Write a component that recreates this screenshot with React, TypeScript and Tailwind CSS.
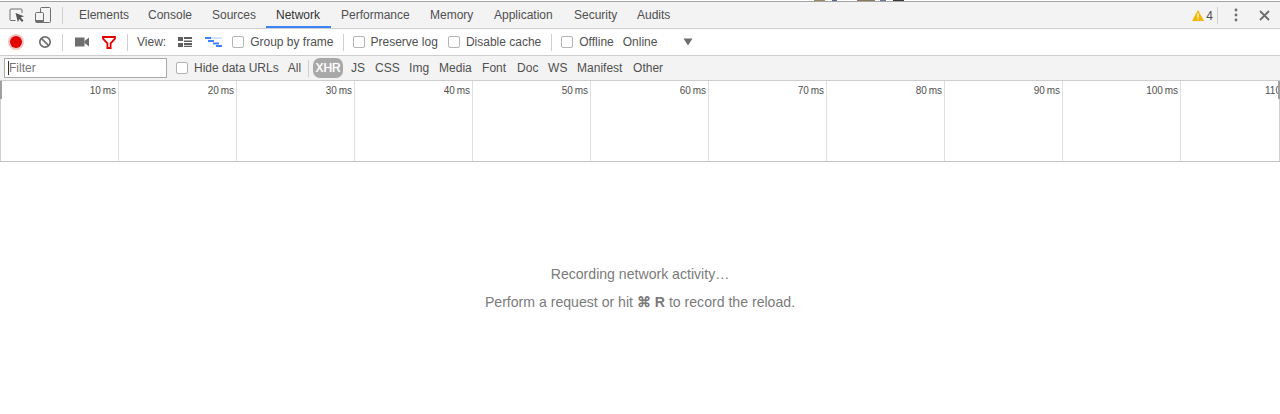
const tabs = [
  { name: 'Elements', w: 'w-[69px]' },
  { name: 'Console', w: 'w-[64px]' },
  { name: 'Sources', w: 'w-[64px]' },
  { name: 'Network', w: 'w-[65px]' },
  { name: 'Performance', w: 'w-[89px]' },
  { name: 'Memory', w: 'w-[64px]' },
  { name: 'Application', w: 'w-[80px]' },
  { name: 'Security', w: 'w-[63px]' },
  { name: 'Audits', w: 'w-[54px]' },
];
const types = [
  { name: 'JS', w: 'w-[24px]' },
  { name: 'CSS', w: 'w-[34px]' },
  { name: 'Img', w: 'w-[30px]' },
  { name: 'Media', w: 'w-[43px]' },
  { name: 'Font', w: 'w-[35px]' },
  { name: 'Doc', w: 'w-[31px]' },
  { name: 'WS', w: 'w-[29px]' },
  { name: 'Manifest', w: 'w-[56px]' },
  { name: 'Other', w: 'w-[40px]' },
];
const ticks = ['10 ms', '20 ms', '30 ms', '40 ms', '50 ms', '60 ms', '70 ms', '80 ms', '90 ms', '100 ms'];

const Divider = ({ className = '' }: { className?: string }) => (
  <div className={`w-px h-[17px] bg-[#cfcfcf] shrink-0 ${className}`} />
);

const Check = ({ label, className = '' }: { label: string; className?: string }) => (
  <div className={`flex items-center shrink-0 ${className}`}>
    <span className="w-3 h-3 rounded-[2px] border border-[#b4b4b4] bg-white mr-[6px] shrink-0" />
    <span>{label}</span>
  </div>
);

const App = () => {
  return (
    <div className="w-[1280px] h-[414px] bg-white overflow-hidden text-[12px] leading-none text-[#505050] font-['Liberation_Sans',Arial,sans-serif]">
      {/* bit of the page showing above devtools */}
      <svg width="1280" height="1" className="block">
        <rect x="814" width="11" height="1" fill="#9a8a60" />
        <rect x="832" width="5" height="1" fill="#5a6a80" />
        <rect x="857" width="18" height="1" fill="#8a7a60" />
        <rect x="880" width="6" height="1" fill="#6a7a8a" />
        <rect x="893" width="11" height="1" fill="#3a3a3a" />
      </svg>
      <div className="h-px bg-[#a3a3a3]" />

      {/* main tabs */}
      <div className="h-[27px] bg-[#f3f3f3] border-b border-[#cdcdcd] flex items-center">
        <svg width="18" height="18" viewBox="0 0 18 18" className="ml-[8px] shrink-0">
          <path d="M7.5 14.5H3a1 1 0 0 1-1-1V4a1 1 0 0 1 1-1h10a1 1 0 0 1 1 1v3" fill="none" stroke="#6e6e6e" strokeWidth="1" />
          <path d="M7.5 7l8.5 3.2-3.4 1.4 2.9 3-1.5 1.3-2.8-3-1.3 3.4z" fill="#555555" />
        </svg>
        <svg width="18" height="18" viewBox="0 0 18 18" className="ml-[8px] shrink-0">
          <rect x="6.5" y="1.5" width="10" height="15" rx="1" fill="none" stroke="#6e6e6e" />
          <rect x="1.5" y="6.5" width="8" height="10" rx="1" fill="#f3f3f3" stroke="#6e6e6e" />
          <rect x="2" y="14" width="7" height="2.5" fill="#6e6e6e" />
        </svg>
        <Divider className="ml-[10px]" />
        <div className="flex h-full ml-[6px]">
          {tabs.map((t) => (
            <div
              key={t.name}
              className={`${t.w} pl-[10px] pt-px h-full flex items-center border-b-2 -mb-px ${t.name === 'Network' ? 'border-[#3e82f7] text-[#333333]' : 'border-transparent'}`}
            >
              {t.name}
            </div>
          ))}
        </div>
        <div className="ml-auto flex items-center">
          <svg width="12" height="11" viewBox="0 0 12 11" className="shrink-0">
            <path d="M6 0L12 11H0z" fill="#f2b600" />
            <rect x="5.4" y="3.5" width="1.2" height="4" fill="#fff" />
            <rect x="5.4" y="8.3" width="1.2" height="1.2" fill="#fff" />
          </svg>
          <span className="ml-[2px] pt-px">4</span>
          <Divider className="ml-[4px]" />
          <svg width="4" height="14" viewBox="0 0 4 14" className="ml-[16px] shrink-0">
            <circle cx="2" cy="2" r="1.4" fill="#6e6e6e" />
            <circle cx="2" cy="7" r="1.4" fill="#6e6e6e" />
            <circle cx="2" cy="12" r="1.4" fill="#6e6e6e" />
          </svg>
          <svg width="11" height="11" viewBox="0 0 11 11" className="ml-[21px] mr-[10px] shrink-0">
            <path d="M1 1l9 9M10 1l-9 9" stroke="#6e6e6e" strokeWidth="1.8" />
          </svg>
        </div>
      </div>

      {/* network toolbar */}
      <div className="h-[27px] bg-white border-b border-[#cdcdcd] flex items-center">
        <svg width="18" height="18" viewBox="0 0 18 18" className="ml-[7px] shrink-0">
          <circle cx="9" cy="9" r="8" fill="#f5c5c5" />
          <circle cx="9" cy="9" r="6" fill="#e30000" />
        </svg>
        <svg width="14" height="14" viewBox="0 0 14 14" className="ml-[13px] shrink-0">
          <circle cx="7" cy="7" r="5.2" fill="none" stroke="#6e6e6e" strokeWidth="1.7" />
          <path d="M3.3 3.3l7.4 7.4" stroke="#6e6e6e" strokeWidth="1.7" />
        </svg>
        <Divider className="ml-[10px]" />
        <svg width="14" height="10" viewBox="0 0 14 10" className="ml-[12px] shrink-0">
          <rect x="0" y="0.5" width="9.5" height="9" fill="#6e6e6e" />
          <path d="M9.5 4L14 0.5v9L9.5 6z" fill="#6e6e6e" />
        </svg>
        <svg width="14" height="13" viewBox="0 0 14 13" className="ml-[13px] shrink-0">
          <path d="M1 1h12v1.6L8.6 7.4v4.6H5.4V7.4L1 2.6z" fill="#fff" stroke="#e30000" strokeWidth="1.8" />
        </svg>
        <Divider className="ml-[11px]" />
        <span className="ml-[9px]">View:</span>
        <svg width="14" height="10" viewBox="0 0 14 10" className="ml-[12px] shrink-0">
          <path d="M0 0h5v4H0zM0 6h5v4H0zM6 0h8v2H6zM6 3.5h8v1.5H6zM6 6h8v2H6zM6 8.7h8v1.3H6z" fill="#5f5f5f" />
        </svg>
        <svg width="17" height="10" viewBox="0 0 17 10" className="ml-[13px] shrink-0">
          <rect x="0" y="0" width="6" height="2" fill="#3e82f7" />
          <rect x="6" y="0" width="11" height="2" fill="#d4e3fc" />
          <rect x="3" y="3" width="6" height="2" fill="#3e82f7" />
          <rect x="8" y="5.5" width="6" height="2" fill="#3e82f7" />
          <rect x="11" y="8" width="6" height="2" fill="#3e82f7" />
        </svg>
        <Check label="Group by frame" className="ml-[10px]" />
        <Divider className="ml-[9px]" />
        <Check label="Preserve log" className="ml-[9px]" />
        <Check label="Disable cache" className="ml-[10px]" />
        <Divider className="ml-[10px]" />
        <Check label="Offline" className="ml-[9px]" />
        <span className="ml-[9px]">Online</span>
        <svg width="10" height="8" viewBox="0 0 10 8" className="ml-[26px] shrink-0">
          <path d="M0.5 0.5h9L5 7.5z" fill="#6e6e6e" />
        </svg>
      </div>

      {/* filter bar */}
      <div className="h-[25px] bg-[#f3f3f3] border-b border-[#cdcdcd] flex items-center">
        <div className="ml-[4px] w-[163px] h-[20px] bg-white border border-[#a9a9a9] flex items-center pl-[3px] text-[#757575] shrink-0">
          <span className="w-px h-[14px] bg-[#333333]" />
          Filter
        </div>
        <Check label="Hide data URLs" className="ml-[9px]" />
        <span className="ml-[9px]">All</span>
        <Divider className="ml-[7px]" />
        <span className="ml-[4px] h-[20px] px-[2px] min-w-[30px] rounded-[7px] bg-[#a8a8a8] text-white [text-shadow:0_0_1px_#ffffff] flex items-center justify-center">XHR</span>
        <div className="flex ml-[8px]">
          {types.map((t) => (
            <span key={t.name} className={t.w}>{t.name}</span>
          ))}
        </div>
      </div>

      {/* timeline overview */}
      <div className="relative h-[81px] pl-px border-b border-[#c4c4c4] flex overflow-hidden text-[10px] text-[#505050] [word-spacing:-1px]">
        <div className="absolute left-0 top-0 w-[2px] h-[18px] bg-[#a0a0a0]" />
        <div className="absolute right-0 top-0 w-[2px] h-[18px] bg-[#a0a0a0]" />
        <div className="absolute left-0 top-[18px] bottom-0 w-px bg-[#cfcfcf]" />
        <div className="absolute right-0 top-[18px] bottom-0 w-px bg-[#cfcfcf]" />
        {ticks.map((t) => (
          <div key={t} className="w-[118px] shrink-0 border-r border-[#e0e0e0] text-right pr-[2px] pt-[5px]">
            {t}
          </div>
        ))}
        <div className="pl-[84px] pt-[5px] w-[99px] shrink-0 overflow-hidden whitespace-nowrap">110</div>
      </div>

      {/* empty state */}
      <div className="flex flex-col items-center text-[14.1px] text-[#7b7b7b] pt-[104px]">
        <div className="h-[16px] leading-[16px]">Recording network activity…</div>
        <div className="h-[16px] leading-[16px] mt-[12px]">
          Perform a request or hit <span className="font-bold">⌘ R</span> to record the reload.
        </div>
      </div>
    </div>
  );
};

export default App;
